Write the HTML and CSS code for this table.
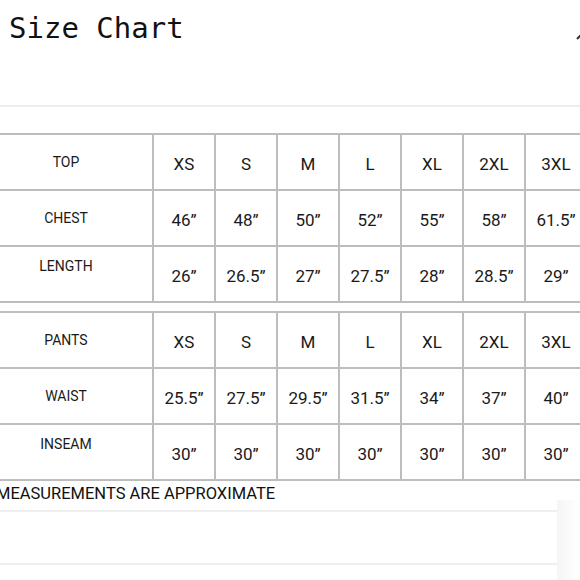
FILE: index.html
```html
<!DOCTYPE html>
<html>
<head>
<meta charset="utf-8">
<link rel="stylesheet" href="styles.css">
</head>
<body>
<div class="page">
  <header class="head">
    <h1 class="title">Size Chart</h1>
    <svg class="corner" width="10" height="10" viewBox="0 0 10 10"><path d="M2 9 L7 4" stroke="#333" stroke-width="2" fill="none"/></svg>
  </header>
  <div class="divider"></div>

  <div class="chart">
    <div class="label">TOP</div><div class="val">XS</div><div class="val">S</div><div class="val">M</div><div class="val">L</div><div class="val">XL</div><div class="val">2XL</div><div class="val">3XL</div>
    <div class="label">CHEST</div><div class="val">46”</div><div class="val">48”</div><div class="val">50”</div><div class="val">52”</div><div class="val">55”</div><div class="val">58”</div><div class="val">61.5”</div>
    <div class="label raised">LENGTH</div><div class="val">26”</div><div class="val">26.5”</div><div class="val">27”</div><div class="val">27.5”</div><div class="val">28”</div><div class="val">28.5”</div><div class="val">29”</div>
  </div>

  <div class="chart second">
    <div class="label">PANTS</div><div class="val">XS</div><div class="val">S</div><div class="val">M</div><div class="val">L</div><div class="val">XL</div><div class="val">2XL</div><div class="val">3XL</div>
    <div class="label">WAIST</div><div class="val">25.5”</div><div class="val">27.5”</div><div class="val">29.5”</div><div class="val">31.5”</div><div class="val">34”</div><div class="val">37”</div><div class="val">40”</div>
    <div class="label raised">INSEAM</div><div class="val">30”</div><div class="val">30”</div><div class="val">30”</div><div class="val">30”</div><div class="val">30”</div><div class="val">30”</div><div class="val">30”</div>
  </div>

  <p class="note">MEASUREMENTS ARE APPROXIMATE</p>

  <div class="lower">
    <div class="rows">
      <div class="row-line"></div>
      <div class="row-line"></div>
    </div>
    <div class="side-card"></div>
  </div>
</div>
</body>
</html>
```

FILE: styles.css
```css
html, body {
  margin: 0;
  padding: 0;
  background: #ffffff;
}
.page {
  width: 580px;
  height: 580px;
  overflow: hidden;
  font-family: Roboto, "Liberation Sans", sans-serif;
  color: #111;
}
.head {
  display: flex;
  justify-content: space-between;
  align-items: flex-start;
  height: 105px;
  padding-left: 9px;
}
.title {
  margin: 11px 0 0 0;
  font-family: "DejaVu Sans Mono", monospace;
  font-weight: normal;
  font-size: 29px;
  line-height: 35px;
  color: #111;
}
.corner {
  margin-top: 30px;
  margin-right: -5px;
}
.divider {
  height: 2px;
  background: #eeeeee;
}
.chart {
  margin-top: 26px;
  width: 586px;
  display: grid;
  grid-template-columns: 152px repeat(7, 60px);
  grid-auto-rows: 54px;
  column-gap: 2px;
  row-gap: 2px;
  padding: 2px 0;
  background: #bdbdbd;
}
.chart.second {
  margin-top: 8px;
}
.label, .val {
  background: #fff;
  display: flex;
  align-items: center;
  justify-content: center;
}
.label {
  font-size: 14px;
  padding-right: 20px;
  color: #1a1a1a;
}
.label.raised {
  padding-bottom: 16px;
}
.val {
  font-size: 17px;
  padding-top: 4px;
  color: #1a1a1a;
  white-space: nowrap;
}
.note {
  margin: 3px 0 0 -4px;
  font-size: 16.5px;
  line-height: 20px;
  color: #111;
}
.lower {
  display: flex;
  margin-top: 6px;
}
.rows {
  width: 557px;
  display: flex;
  flex-direction: column;
  gap: 51px;
}
.row-line {
  height: 2px;
  background: #efefef;
}
.side-card {
  flex: 1;
  margin-top: -10px;
  height: 90px;
  background: linear-gradient(90deg, #f5f5f5, #ffffff);
}
```
